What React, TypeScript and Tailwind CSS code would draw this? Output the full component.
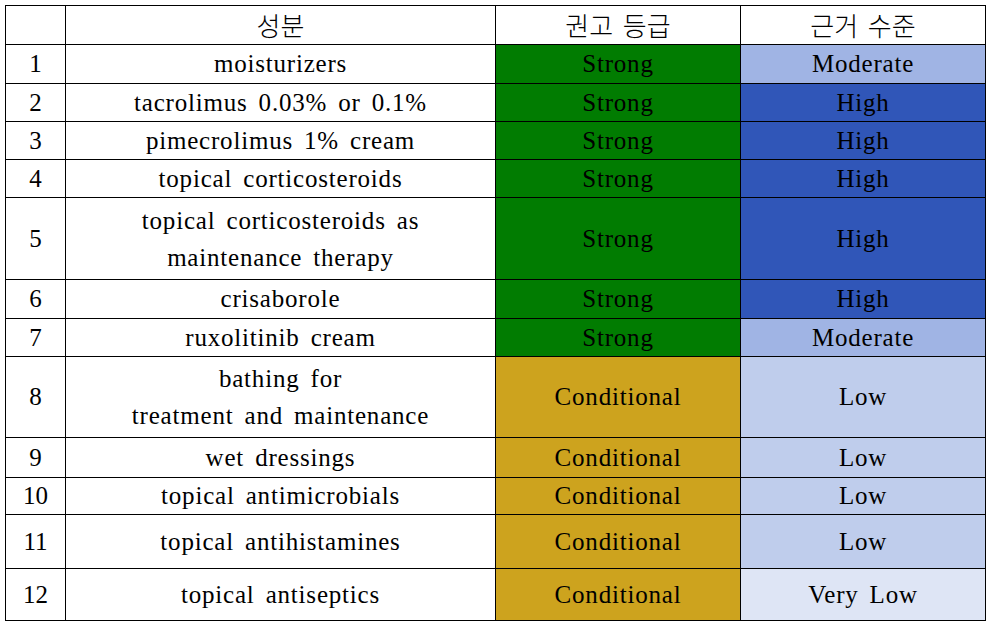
import React from "react";

type Row = { n: string; name: string[]; grade: "Strong" | "Conditional"; ev: string; h: number };

const rows: Row[] = [
  { n: "1", name: ["moisturizers"], grade: "Strong", ev: "Moderate", h: 39 },
  { n: "2", name: ["tacrolimus 0.03% or 0.1%"], grade: "Strong", ev: "High", h: 38 },
  { n: "3", name: ["pimecrolimus 1% cream"], grade: "Strong", ev: "High", h: 38 },
  { n: "4", name: ["topical corticosteroids"], grade: "Strong", ev: "High", h: 38 },
  { n: "5", name: ["topical corticosteroids as", "maintenance therapy"], grade: "Strong", ev: "High", h: 82 },
  { n: "6", name: ["crisaborole"], grade: "Strong", ev: "High", h: 39 },
  { n: "7", name: ["ruxolitinib cream"], grade: "Strong", ev: "Moderate", h: 38 },
  { n: "8", name: ["bathing for", "treatment and maintenance"], grade: "Conditional", ev: "Low", h: 81 },
  { n: "9", name: ["wet dressings"], grade: "Conditional", ev: "Low", h: 40 },
  { n: "10", name: ["topical antimicrobials"], grade: "Conditional", ev: "Low", h: 37 },
  { n: "11", name: ["topical antihistamines"], grade: "Conditional", ev: "Low", h: 54 },
  { n: "12", name: ["topical antiseptics"], grade: "Conditional", ev: "Very Low", h: 52 },
];

function gradeBg(g: string) {
  return g === "Strong" ? "bg-[#017c01]" : "bg-[#cda31e]";
}
function evBg(e: string) {
  if (e === "High") return "bg-[#3056b8]";
  if (e === "Moderate") return "bg-[#a0b4e4]";
  if (e === "Low") return "bg-[#bfcdec]";
  return "bg-[#dee5f5]";
}

export default function App() {
  return (
    <div className="w-[991px] h-[628px] bg-white p-[5px] font-['Liberation_Serif','Noto_Sans_CJK_KR',serif] text-black text-[25px] leading-[30px] tracking-[0.8px] [word-spacing:4px]">
      <table className="border-collapse table-fixed w-[980px]">
        <colgroup>
          <col className="w-[60px]" />
          <col className="w-[430px]" />
          <col className="w-[245px]" />
          <col className="w-[245px]" />
        </colgroup>
        <thead>
          <tr className="h-[39px]">
            <th className="border border-black font-normal p-0"></th>
            <th className="border border-black font-light font-['Noto_Sans_CJK_KR',sans-serif] text-[26px] tracking-normal leading-none p-0">성분</th>
            <th className="border border-black font-light font-['Noto_Sans_CJK_KR',sans-serif] text-[26px] tracking-normal leading-none p-0">권고 등급</th>
            <th className="border border-black font-light font-['Noto_Sans_CJK_KR',sans-serif] text-[26px] tracking-normal leading-none p-0">근거 수준</th>
          </tr>
        </thead>
        <tbody>
          {rows.map((r) => (
            <tr key={r.n} style={{ height: r.h }}>
              <td className="border border-black text-center p-0 tracking-normal">{r.n}</td>
              <td className="border border-black text-center p-0">
                {r.name.length > 1 ? (
                  r.name.map((l, i) => (
                    <div key={i} className="leading-[37px]">
                      {l}
                    </div>
                  ))
                ) : (
                  <div>{r.name[0]}</div>
                )}
              </td>
              <td className={`border border-black text-center p-0 ${gradeBg(r.grade)}`}>{r.grade}</td>
              <td className={`border border-black text-center p-0 ${evBg(r.ev)}`}>{r.ev}</td>
            </tr>
          ))}
        </tbody>
      </table>
    </div>
  );
}
